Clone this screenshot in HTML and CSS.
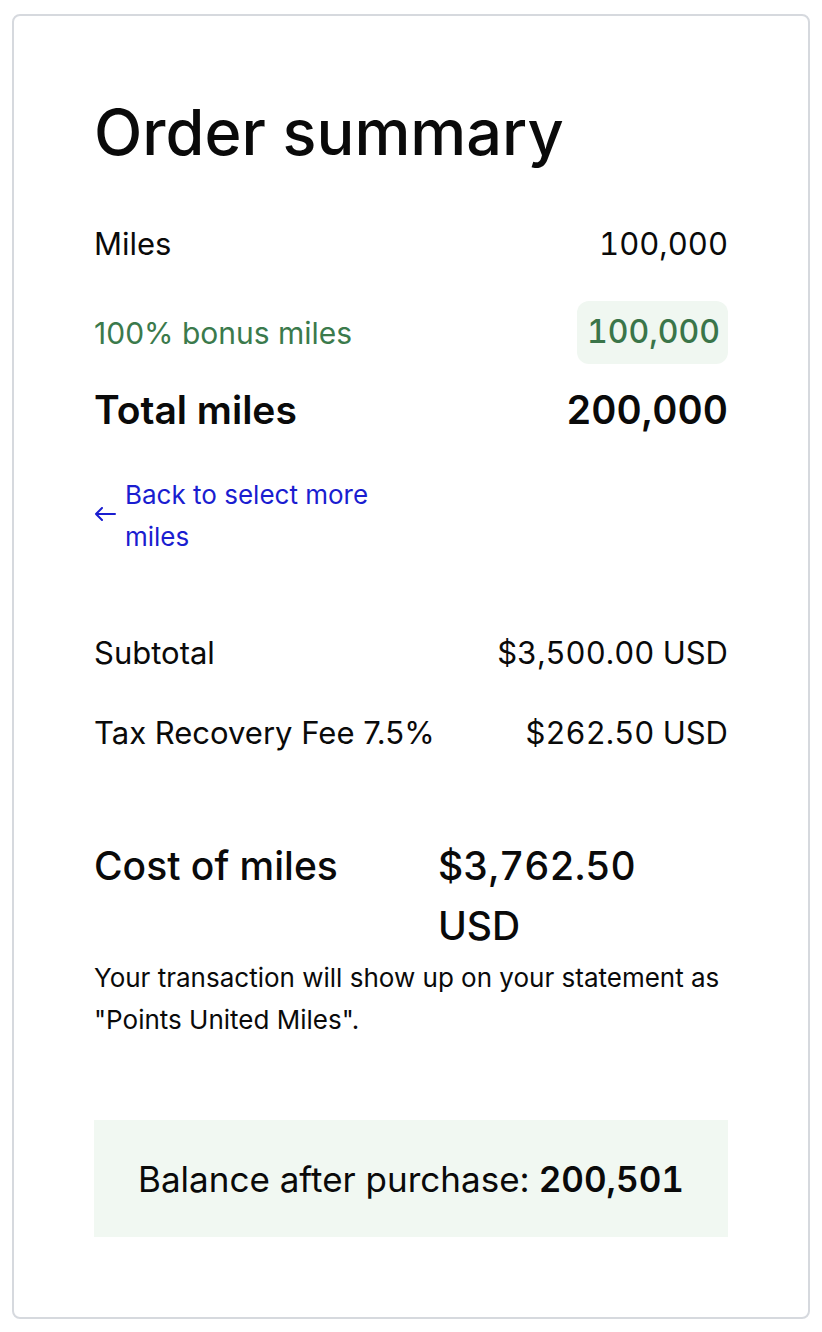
FILE: index.html
```html
<!DOCTYPE html>
<html lang="en">
<head>
<meta charset="utf-8">
<title>Order summary</title>
<link rel="stylesheet" href="styles.css">
</head>
<body>
<main class="card">
  <h1 class="title">Order summary</h1>

  <div class="row row-miles">
    <span>Miles</span>
    <span class="num">100,000</span>
  </div>

  <div class="row row-bonus">
    <span>100% bonus miles</span>
    <span class="badge num">100,000</span>
  </div>

  <div class="row row-total">
    <span>Total miles</span>
    <span class="num">200,000</span>
  </div>

  <a class="back" href="#">
    <svg class="back-arrow" width="22" height="14" viewBox="0 0 22 14" aria-hidden="true">
      <path d="M21 7H2M8 1L2 7l6 6" fill="none" stroke="currentColor" stroke-width="2" stroke-linecap="round" stroke-linejoin="round"/>
    </svg>
    <span class="back-text">Back to select more miles</span>
  </a>

  <div class="row row-subtotal">
    <span>Subtotal</span>
    <span class="num">$3,500.00 USD</span>
  </div>

  <div class="row row-tax">
    <span>Tax Recovery Fee 7.5%</span>
    <span class="num">$262.50 USD</span>
  </div>

  <div class="cost">
    <span class="cost-label">Cost of miles</span>
    <span class="cost-value num">$3,762.50 USD</span>
  </div>

  <p class="notice">Your transaction will show up on your statement as "Points United Miles".</p>

  <div class="balance">
    Balance after purchase: <strong class="num">200,501</strong>
  </div>
</main>
</body>
</html>
```
FILE: styles.css
```css
* { box-sizing: border-box; }

html, body {
  margin: 0;
  background: #ffffff;
}

body {
  padding: 14px 12px 13px 12px;
  font-family: Inter, "Noto Sans", Arial, sans-serif;
  color: #0a0a0a;
}

.card {
  border: 2px solid #d6d9de;
  border-radius: 8px;
  padding: 84px 80px 80px 80px;
  display: flex;
  flex-direction: column;
}

.num {
  font-variant-numeric: tabular-nums;
}

.title {
  margin: 0 0 60px 0;
  font-size: 63px;
  line-height: 64px;
  font-weight: 500;
  letter-spacing: 0;
}

.row {
  display: flex;
  justify-content: space-between;
  align-items: center;
  font-size: 31px;
  line-height: 40px;
}

.row-bonus {
  margin-top: 37px;
  color: #3b7a4c;
  font-size: 30px;
}

.badge {
  background: #f0f7f1;
  border-radius: 12px;
  padding: 11px 8px 12px 10px;
  line-height: 40px;
  font-size: 32px;
  font-weight: 500;
  color: #3a7549;
}

.row-total {
  margin-top: 24px;
  font-size: 39px;
  line-height: 44px;
  font-weight: 600;
}

.back {
  margin-top: 42px;
  display: flex;
  align-items: center;
  gap: 9px;
  width: 50%;
  color: #1a1dd0;
  text-decoration: none;
  font-size: 26px;
  line-height: 42px;
}

.back-arrow {
  flex: none;
  margin-top: -4px;
}

.row-subtotal {
  margin-top: 75px;
}

.row-tax {
  margin-top: 40px;
}

.cost {
  margin-top: 83px;
  display: grid;
  grid-template-columns: 1fr 290px;
  font-size: 39px;
  line-height: 60px;
  font-weight: 500;
}

.cost-value {
  max-width: 240px;
}

.notice {
  margin: 1px 0 0 0;
  font-size: 26px;
  line-height: 42px;
}

.balance {
  margin-top: 79px;
  background: #f1f8f2;
  height: 117px;
  display: flex;
  align-items: center;
  justify-content: center;
  font-size: 35px;
}

.balance strong {
  font-weight: 600;
  margin-left: 9px;
}
```
